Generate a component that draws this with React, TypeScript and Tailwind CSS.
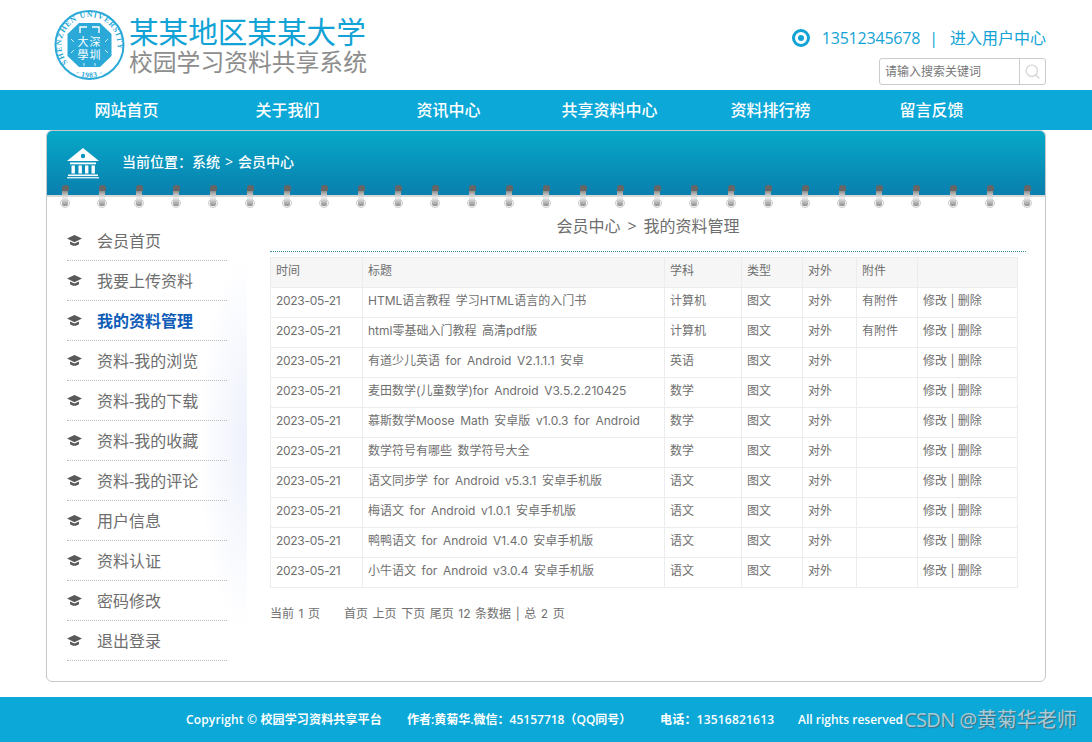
import { Search } from "lucide-react";

const font = { fontFamily: '"Open Sans", "Noto Sans CJK SC", sans-serif' };
const tableFont = { fontFamily: 'Inter, "Noto Sans CJK SC", sans-serif' };

const navItems = ["网站首页", "关于我们", "资讯中心", "共享资料中心", "资料排行榜", "留言反馈"];

const sideItems = [
  "会员首页",
  "我要上传资料",
  "我的资料管理",
  "资料-我的浏览",
  "资料-我的下载",
  "资料-我的收藏",
  "资料-我的评论",
  "用户信息",
  "资料认证",
  "密码修改",
  "退出登录",
];

const rows = [
  ["HTML语言教程 学习HTML语言的入门书", "计算机", "有附件"],
  ["html零基础入门教程 高清pdf版", "计算机", "有附件"],
  ["有道少儿英语 for Android V2.1.1.1 安卓", "英语", ""],
  ["麦田数学(儿童数学)for Android V3.5.2.210425", "数学", ""],
  ["慕斯数学Moose Math 安卓版 v1.0.3 for Android", "数学", ""],
  ["数学符号有哪些 数学符号大全", "数学", ""],
  ["语文同步学 for Android v5.3.1 安卓手机版", "语文", ""],
  ["梅语文 for Android v1.0.1 安卓手机版", "语文", ""],
  ["鸭鸭语文 for Android V1.4.0 安卓手机版", "语文", ""],
  ["小牛语文 for Android v3.0.4 安卓手机版", "语文", ""],
];

function Logo() {
  return (
    <svg width="72" height="72" viewBox="0 0 72 72" className="shrink-0">
      <circle cx="35.5" cy="36" r="34" fill="#fff" stroke="#2aa9d8" strokeWidth="2" />
      <defs>
        <path id="ringTop" d="M 15.7 55.8 A 28 28 0 1 1 55.3 55.8" />
        <path id="ringBottom" d="M 12.5 59 A 32.5 32.5 0 0 0 58.5 59" />
      </defs>
      <text fontSize="7.8" fontFamily='"Liberation Serif", serif' fontWeight="700" fill="#2aa9d8" letterSpacing="0.9">
        <textPath href="#ringTop" startOffset="3">SHENZHEN UNIVERSITY</textPath>
      </text>
      <text fontSize="7.5" fontFamily='"Liberation Serif", serif' fontWeight="700" fill="#2aa9d8" letterSpacing="0.6">
        <textPath href="#ringBottom" startOffset="11">· 1983 ·</textPath>
      </text>
      <polygon points="25,14 46,14 57.5,25 57.5,47 46,58 25,58 13.5,47 13.5,25" fill="#2aa9d8" />
      <path d="M26 24v-6h7M45 24v-6h-7" stroke="#fff" strokeWidth="1.4" fill="none" />
      <path d="M17 30l3 3M54 30l-3 3M17 44l3-3M54 44l-3-3M30 54v3M41 54v3" stroke="#fff" strokeWidth="0.8" fill="none" />
      <text x="35.5" y="37" textAnchor="middle" fontSize="11" letterSpacing="1" fill="#fff" fontFamily='"Noto Sans CJK SC", sans-serif'>
        大深
      </text>
      <text x="35.5" y="50" textAnchor="middle" fontSize="11" letterSpacing="1" fill="#fff" fontFamily='"Noto Sans CJK SC", sans-serif'>
        學圳
      </text>
    </svg>
  );
}

function BankIcon() {
  return (
    <svg width="32" height="32" viewBox="0 0 32 32" className="shrink-0">
      <path d="M16 1 L32 14 H0 Z" fill="#fff" />
      <circle cx="16" cy="9" r="2.2" fill="#0a93bd" />
      <path d="M3 15.5h26v1.8H3z" fill="#fff" />
      <path d="M4.5 18.5h3.4v8H4.5zM11.5 18.5h3.4v8h-3.4zM18 18.5h3.4v8H18zM24.5 18.5h3.4v8h-3.4z" fill="#fff" />
      <path d="M1 27.5h30v1.6H1z" fill="#fff" />
      <path d="M0 30h32v1.4H0z" fill="#d5eef6" />
    </svg>
  );
}

function CapIcon() {
  return (
    <svg width="15" height="12" viewBox="0 0 15 12" className="shrink-0">
      <path d="M7.5 0 L15 3.6 L7.5 7.2 L0 3.6 Z" fill="#595959" />
      <path d="M3 6.4 L7.5 8.6 L12 6.4 V9 C10.5 11.4 4.5 11.4 3 9 Z" fill="#595959" />
    </svg>
  );
}

function Ring() {
  return (
    <div className="flex w-[10px] flex-col items-center">
      <div className="h-[6px] w-[7px] rounded-t-[3px] bg-[#666]" />
      <div className="relative z-10 h-[15px] w-[6px] rounded-b-[2px] bg-gradient-to-b from-[#8a8a8a] via-[#eeeeee] via-[45%] to-[#8f8f8f]" />
      <div className="-mt-[8px] h-[10px] w-[10px] rounded-full border border-[#cfcfcf] bg-[#f2f2f2]" />
    </div>
  );
}

export default function App() {
  return (
    <div className="flex h-[742px] w-[1092px] flex-col overflow-hidden bg-white" style={font}>
      {/* Header */}
      <header className="flex h-[90px] shrink-0 items-start justify-between pl-[54px] pr-[46px]">
        <div className="flex items-center gap-[3px] pt-[9px]">
          <Logo />
          <div className="flex flex-col">
            <div className="h-[34px] text-[29.6px] leading-[34px] text-[#12a3d6]">某某地区某某大学</div>
            <div className="-mt-[1px] h-[28px] text-[23.8px] leading-[28px] text-[#8d8d8d]">校园学习资料共享系统</div>
          </div>
        </div>
        <div className="flex flex-col items-end">
          <div className="mt-[25px] flex h-[26px] items-center text-base text-[#12a3d6]">
            <span className="mr-[12px] flex h-[18px] w-[18px] items-center justify-center rounded-full border-[3px] border-[#12a3d6]">
              <span className="h-[6px] w-[6px] rounded-full bg-[#12a3d6]" />
            </span>
            <span className="tracking-[-0.2px]">13512345678</span>
            <span className="ml-[9px] mr-[12px]">|</span>
            <span>进入用户中心</span>
          </div>
          <div className="mt-[7px] flex h-[27px] w-[167px] overflow-hidden rounded-[3px] border border-[#ccc]">
            <div className="flex-1 pl-[5px] text-xs leading-[25px] text-[#777]">请输入搜索关键词</div>
            <div className="flex w-[26px] items-center justify-center border-l border-[#ccc]">
              <Search size={17} strokeWidth={2} className="text-[#d8d8d8]" />
            </div>
          </div>
        </div>
      </header>

      {/* Nav */}
      <nav className="flex h-10 shrink-0 bg-[#0ba8d8] pl-[46px]">
        {navItems.map((item) => (
          <a key={item} className="w-[161px] text-center text-base font-medium leading-10 text-white">
            {item}
          </a>
        ))}
      </nav>

      {/* Panel */}
      <main className="mx-[46px] h-[552px] shrink-0 rounded-[6px] border border-[#c8c8c8]">
        <div className="flex h-[64px] items-center gap-[23px] rounded-t-[5px] bg-gradient-to-b from-[#06a9c9] to-[#0a7fae] pl-[20px]">
          <BankIcon />
          <div className="flex pb-[2px] text-sm font-medium text-white">
            <span>当前位置：系统</span>
            <span className="mx-[5px]">&gt;</span>
            <span>会员中心</span>
          </div>
        </div>
        <div className="h-[2px] bg-[#d9d9d9]" />
        <div className="-mt-[12px] flex justify-between px-[13px]">
          {Array.from({ length: 27 }).map((_, i) => (
            <Ring key={i} />
          ))}
        </div>

        <div className="mt-[13px] flex">
          {/* Sidebar */}
          <aside className="h-[445px] w-[200px] shrink-0 bg-[radial-gradient(ellipse_48px_190px_at_100%_50%,#eef1fc,transparent)] pl-[20px]">
            <ul className="w-[160px]">
              {sideItems.map((item) => (
                <li
                  key={item}
                  className="flex h-10 items-center gap-[15px] border-b border-dotted border-[#bdbdbd]"
                >
                  <CapIcon />
                  <span
                    className={
                      item === "我的资料管理"
                        ? "text-base font-bold text-[#0d5cb8]"
                        : "text-base text-[#6e6e6e]"
                    }
                  >
                    {item}
                  </span>
                </li>
              ))}
            </ul>
          </aside>

          {/* Content */}
          <section className="ml-[23px] w-[756px]">
            <h2 className="-mt-[7px] flex h-[37px] justify-center text-base font-normal leading-[24px] text-[#6e6e6e]">
              <span>会员中心</span>
              <span className="mx-[7px]">&gt;</span>
              <span>我的资料管理</span>
            </h2>
            <div className="border-b border-dotted border-[#3a8ea8]" />
            <table className="mt-[5px] w-[747px] table-fixed border-collapse text-xs text-[#707070]" style={tableFont}>
              <colgroup>
                <col className="w-[92px]" />
                <col className="w-[302px]" />
                <col className="w-[77px]" />
                <col className="w-[61px]" />
                <col className="w-[54px]" />
                <col className="w-[61px]" />
                <col className="w-[100px]" />
              </colgroup>
              <thead>
                <tr className="h-[30px] bg-[#f6f6f6]">
                  {["时间", "标题", "学科", "类型", "对外", "附件", ""].map((h, i) => (
                    <th key={i} className="border border-[#ececec] px-[5px] pb-[3px] text-left font-normal">
                      {h}
                    </th>
                  ))}
                </tr>
              </thead>
              <tbody>
                {rows.map((r) => (
                  <tr key={r[0]} className="h-[30px]">
                    <td className="border border-[#ececec] px-[5px] pb-[3px] tracking-[-0.3px]">2023-05-21</td>
                    <td className="truncate border border-[#ececec] px-[5px] pb-[3px] [word-spacing:2.2px]">{r[0]}</td>
                    <td className="border border-[#ececec] px-[5px] pb-[3px]">{r[1]}</td>
                    <td className="border border-[#ececec] px-[5px] pb-[3px]">图文</td>
                    <td className="border border-[#ececec] px-[5px] pb-[3px]">对外</td>
                    <td className="border border-[#ececec] px-[5px] pb-[3px]">{r[2]}</td>
                    <td className="border border-[#ececec] px-[5px] pb-[3px]">修改 | 删除</td>
                  </tr>
                ))}
              </tbody>
            </table>
            <div className="mt-[17px] flex text-xs leading-[18px] text-[#707070] [word-spacing:1.2px]" style={tableFont}>
              <span className="mr-[24px]">当前 1 页</span>
              <span>首页 上页 下页 尾页 12 条数据 | 总 2 页</span>
            </div>
          </section>
        </div>
      </main>

      {/* Footer */}
      <footer className="relative mt-[15px] flex h-[45px] shrink-0 items-center bg-[#0ba8d8] pl-[186px] text-xs font-semibold text-white">
        <span className="w-[221px] tracking-[0.15px]">Copyright © 校园学习资料共享平台</span>
        <span className="w-[253px]">作者:黄菊华.微信：45157718（QQ同号）</span>
        <span className="w-[138px] tracking-[0.2px]">电话：13516821613</span>
        <span>All rights reserved</span>
        <span className="absolute left-[904px] top-[9px] text-xl font-normal text-[#a9cbd8] [text-shadow:1px_1px_1px_#4b6b7a]">
          <span className="tracking-[-0.6px]">CSDN @</span>黄菊华老师
        </span>
      </footer>
    </div>
  );
}
